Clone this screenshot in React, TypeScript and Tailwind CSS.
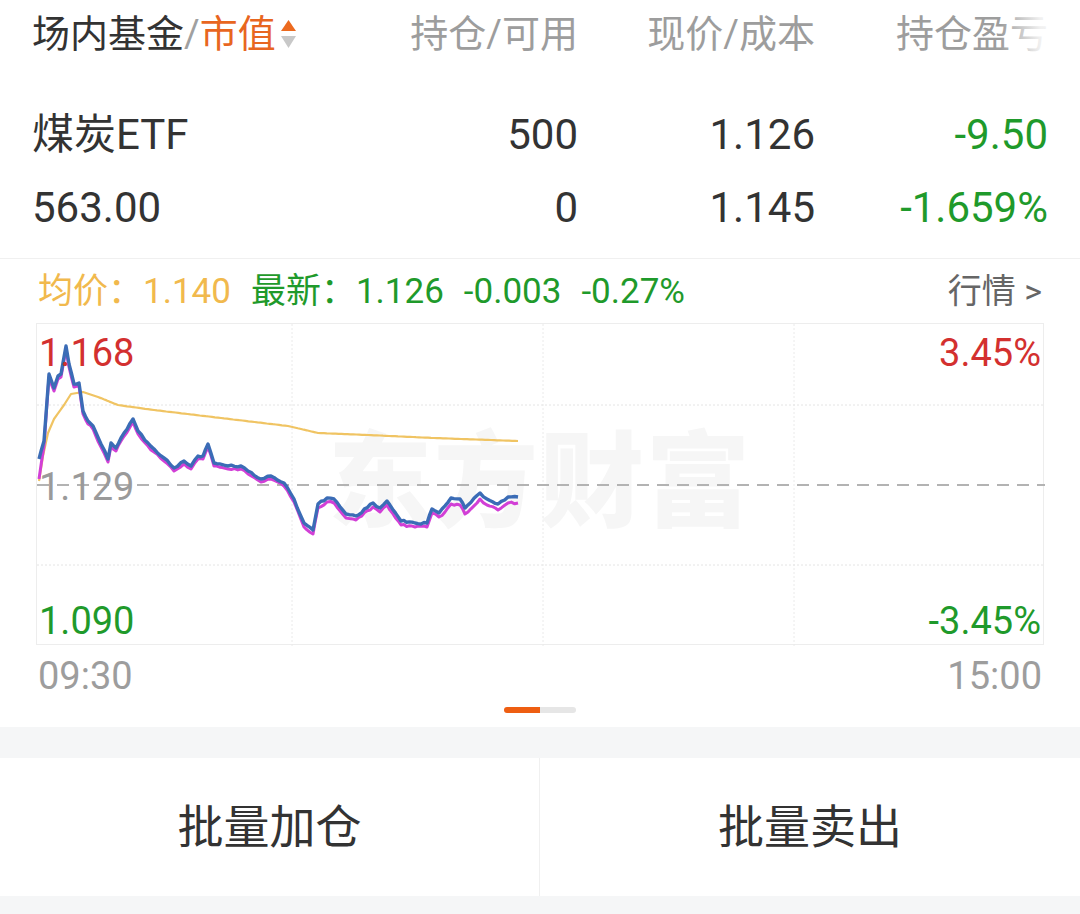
import React from "react";

type Pt = [number, number];

// 分时价格 (page coordinates, converted to chart-local below)
const PRICE: Pt[] = [
  [38, 458], [43, 440], [48, 373], [53, 387], [57, 375], [60, 373], [65, 345],
  [68, 363], [73, 383], [78, 382], [82, 410], [87, 420], [92, 425], [100, 443],
  [107, 458], [110, 442], [115, 447], [120, 437], [132, 418], [137, 430],
  [147, 442], [153, 448], [163, 457], [173, 467], [183, 460], [190, 465],
  [197, 455], [202, 455], [207, 443], [213, 462], [227, 465], [240, 465],
  [247, 470], [260, 478], [270, 475], [283, 482], [293, 498], [303, 522],
  [312, 529], [317, 503], [326, 497], [333, 498], [345, 513], [355, 515],
  [372, 502], [379, 507], [386, 500], [400, 520], [414, 522], [426, 522],
  [431, 508], [438, 512], [450, 497], [459, 498], [464, 507], [479, 492],
  [486, 498], [497, 503], [507, 496], [517, 496],
];

const AVG: Pt[] = [
  [38, 480], [42, 455], [47, 432], [53, 418], [63, 404], [70, 393], [82, 391],
  [97, 396], [117, 404], [153, 409], [220, 417], [287, 425], [300, 428],
  [317, 432], [367, 434], [433, 437], [517, 440],
];

function rand(i: number, seed: number) {
  const v = Math.sin(i * 12.9898 + seed * 78.233) * 43758.5453;
  return v - Math.floor(v) - 0.5;
}

function toPath(pts: Pt[], dy: (x: number) => number, amp: number, seed: number) {
  const out: Pt[] = [];
  let k = 0;
  for (let i = 0; i < pts.length - 1; i++) {
    const [x0, y0] = pts[i];
    const [x1, y1] = pts[i + 1];
    const n = Math.max(1, Math.round((x1 - x0) / 3));
    for (let j = 0; j < n; j++) {
      const t = j / n;
      const x = x0 + (x1 - x0) * t;
      const noise = j === 0 || amp === 0 ? 0 : rand(k++, seed) * amp;
      out.push([x, y0 + (y1 - y0) * t + dy(x) + noise]);
    }
  }
  const last = pts[pts.length - 1];
  out.push([last[0], last[1] + dy(last[0])]);
  return out
    .map(([x, y], i) => `${i ? "L" : "M"}${(x - 36).toFixed(1)} ${(y - 323).toFixed(1)}`)
    .join(" ");
}

const magentaOffset = (x: number) => {
  if (x < 44) return 20 - (x - 38) * 3;
  if (x < 300) return 3;
  if (x < 440) return 4;
  return 6;
};

function SortArrows() {
  return (
    <svg width="17" height="34" viewBox="0 0 17 34" className="ml-[4px]">
      <path d="M8.5 3 L16 14 L1 14 Z" fill="#ec6a1f" />
      <path d="M1 19 L16 19 L8.5 31 Z" fill="#c8c8c8" />
    </svg>
  );
}

function PriceChart() {
  const blue = toPath(PRICE, () => 0, 2, 1);
  const magenta = toPath(PRICE, magentaOffset, 2, 7);
  const avg = toPath(AVG, () => 0, 0, 3);

  return (
    <div className="relative mx-[36px] h-[322px] border border-[#ededed]">
      <div className="absolute inset-0 flex items-center justify-center">
        <span className="text-[104px] font-black leading-none tracking-[2px] text-[#f6f6f6]">
          东方财富
        </span>
      </div>
      <svg className="absolute inset-0" width="1008" height="322" viewBox="0 0 1008 322">
        {[255, 506, 757].map((x) => (
          <line key={x} x1={x} y1={0} x2={x} y2={322} stroke="#eaeaea" strokeWidth="1" strokeDasharray="2 2" />
        ))}
        {[81, 241].map((y) => (
          <line key={y} x1={0} y1={y} x2={1008} y2={y} stroke="#e4e4e4" strokeWidth="1" strokeDasharray="2 2" />
        ))}
        <line x1={0} y1={161} x2={1008} y2={161} stroke="#b3b3b3" strokeWidth="2" strokeDasharray="12 8" />
        <path d={avg} fill="none" stroke="#f0c463" strokeWidth="2.2" strokeLinejoin="round" />
        <path d={magenta} fill="none" stroke="#d23fd6" strokeWidth="3" strokeLinejoin="round" />
        <path d={blue} fill="none" stroke="#3b6cb6" strokeWidth="3.4" strokeLinejoin="round" />
      </svg>
      <div className="relative flex h-full flex-col justify-between px-[2px] pt-[6px] pb-0 text-[38px] leading-[46px]">
        <div className="flex justify-between">
          <span className="text-[#d3302f]">1.168</span>
          <span className="text-[#d3302f]">3.45%</span>
        </div>
        <div className="flex justify-between">
          <span className="text-[#9a9a9a]">1.129</span>
        </div>
        <div className="flex justify-between">
          <span className="text-[#1f9a2b]">1.090</span>
          <span className="text-[#1f9a2b]">-3.45%</span>
        </div>
      </div>
    </div>
  );
}

export default function App() {
  return (
    <div className="w-[1080px] h-[914px] bg-white overflow-hidden font-['Roboto','Noto_Sans_CJK_SC',sans-serif] text-[#333]">
      {/* 表头 */}
      <div className="relative grid h-[68px] grid-cols-[1fr_232px_237px_233px] items-center px-8 text-[38px] leading-none">
        <div className="flex items-center">
          <span className="text-[#333]">场内基金</span>
          <span className="text-[#a0a0a0]">/</span>
          <span className="text-[#e8661f]">市值</span>
          <SortArrows />
        </div>
        <div className="text-right text-[#9d9d9d]">持仓/可用</div>
        <div className="text-right text-[#9d9d9d]">现价/成本</div>
        <div className="text-right whitespace-nowrap text-[#9d9d9d]">持仓盈亏</div>
        <div className="absolute right-0 top-0 h-full w-[80px] bg-linear-to-l from-white via-white/85 to-transparent" />
      </div>

      {/* 持仓 */}
      <div className="flex flex-col gap-[23px] px-8 pt-[42px] pb-[25px] text-[42px] leading-none border-b border-[#f0f0f0]">
        <div className="grid h-[50px] grid-cols-[1fr_232px_237px_233px] items-center">
          <span>煤炭ETF</span>
          <span className="text-right">500</span>
          <span className="text-right">1.126</span>
          <span className="text-right text-[#1f9a2b]">-9.50</span>
        </div>
        <div className="grid h-[50px] grid-cols-[1fr_232px_237px_233px] items-center">
          <span>563.00</span>
          <span className="text-right">0</span>
          <span className="text-right">1.145</span>
          <span className="text-right text-[#1f9a2b]">-1.659%</span>
        </div>
      </div>

      {/* 均价/最新 */}
      <div className="flex h-[64px] items-center justify-between pl-[38px] pr-[38px] text-[35px] leading-none">
        <div className="flex items-center gap-[20px]">
          <span className="text-[#f1b94d]">均价：1.140</span>
          <span className="text-[#1f9a2b]">最新：1.126</span>
          <span className="text-[#1f9a2b]">-0.003</span>
          <span className="text-[#1f9a2b]">-0.27%</span>
        </div>
        <span className="text-[34px] text-[#666]">行情 &gt;</span>
      </div>

      <PriceChart />

      <div className="flex h-[62px] items-center justify-between px-[38px] text-[38px] leading-none text-[#9d9d9d]">
        <span>09:30</span>
        <span>15:00</span>
      </div>

      <div className="flex justify-center">
        <div className="h-[6px] w-[36px] rounded-l-full bg-[#ee5e12]" />
        <div className="h-[6px] w-[36px] rounded-r-full bg-[#e6e6e6]" />
      </div>

      <div className="mt-[14px] h-[31px] bg-[#f5f6f7]" />

      <div className="grid h-[138px] grid-cols-2 text-[46px] leading-none text-[#333]">
        <button className="flex items-center justify-center border-r border-[#f0f0f0]">批量加仓</button>
        <button className="flex items-center justify-center">批量卖出</button>
      </div>

      <div className="h-[18px] bg-[#f5f6f7]" />
    </div>
  );
}
